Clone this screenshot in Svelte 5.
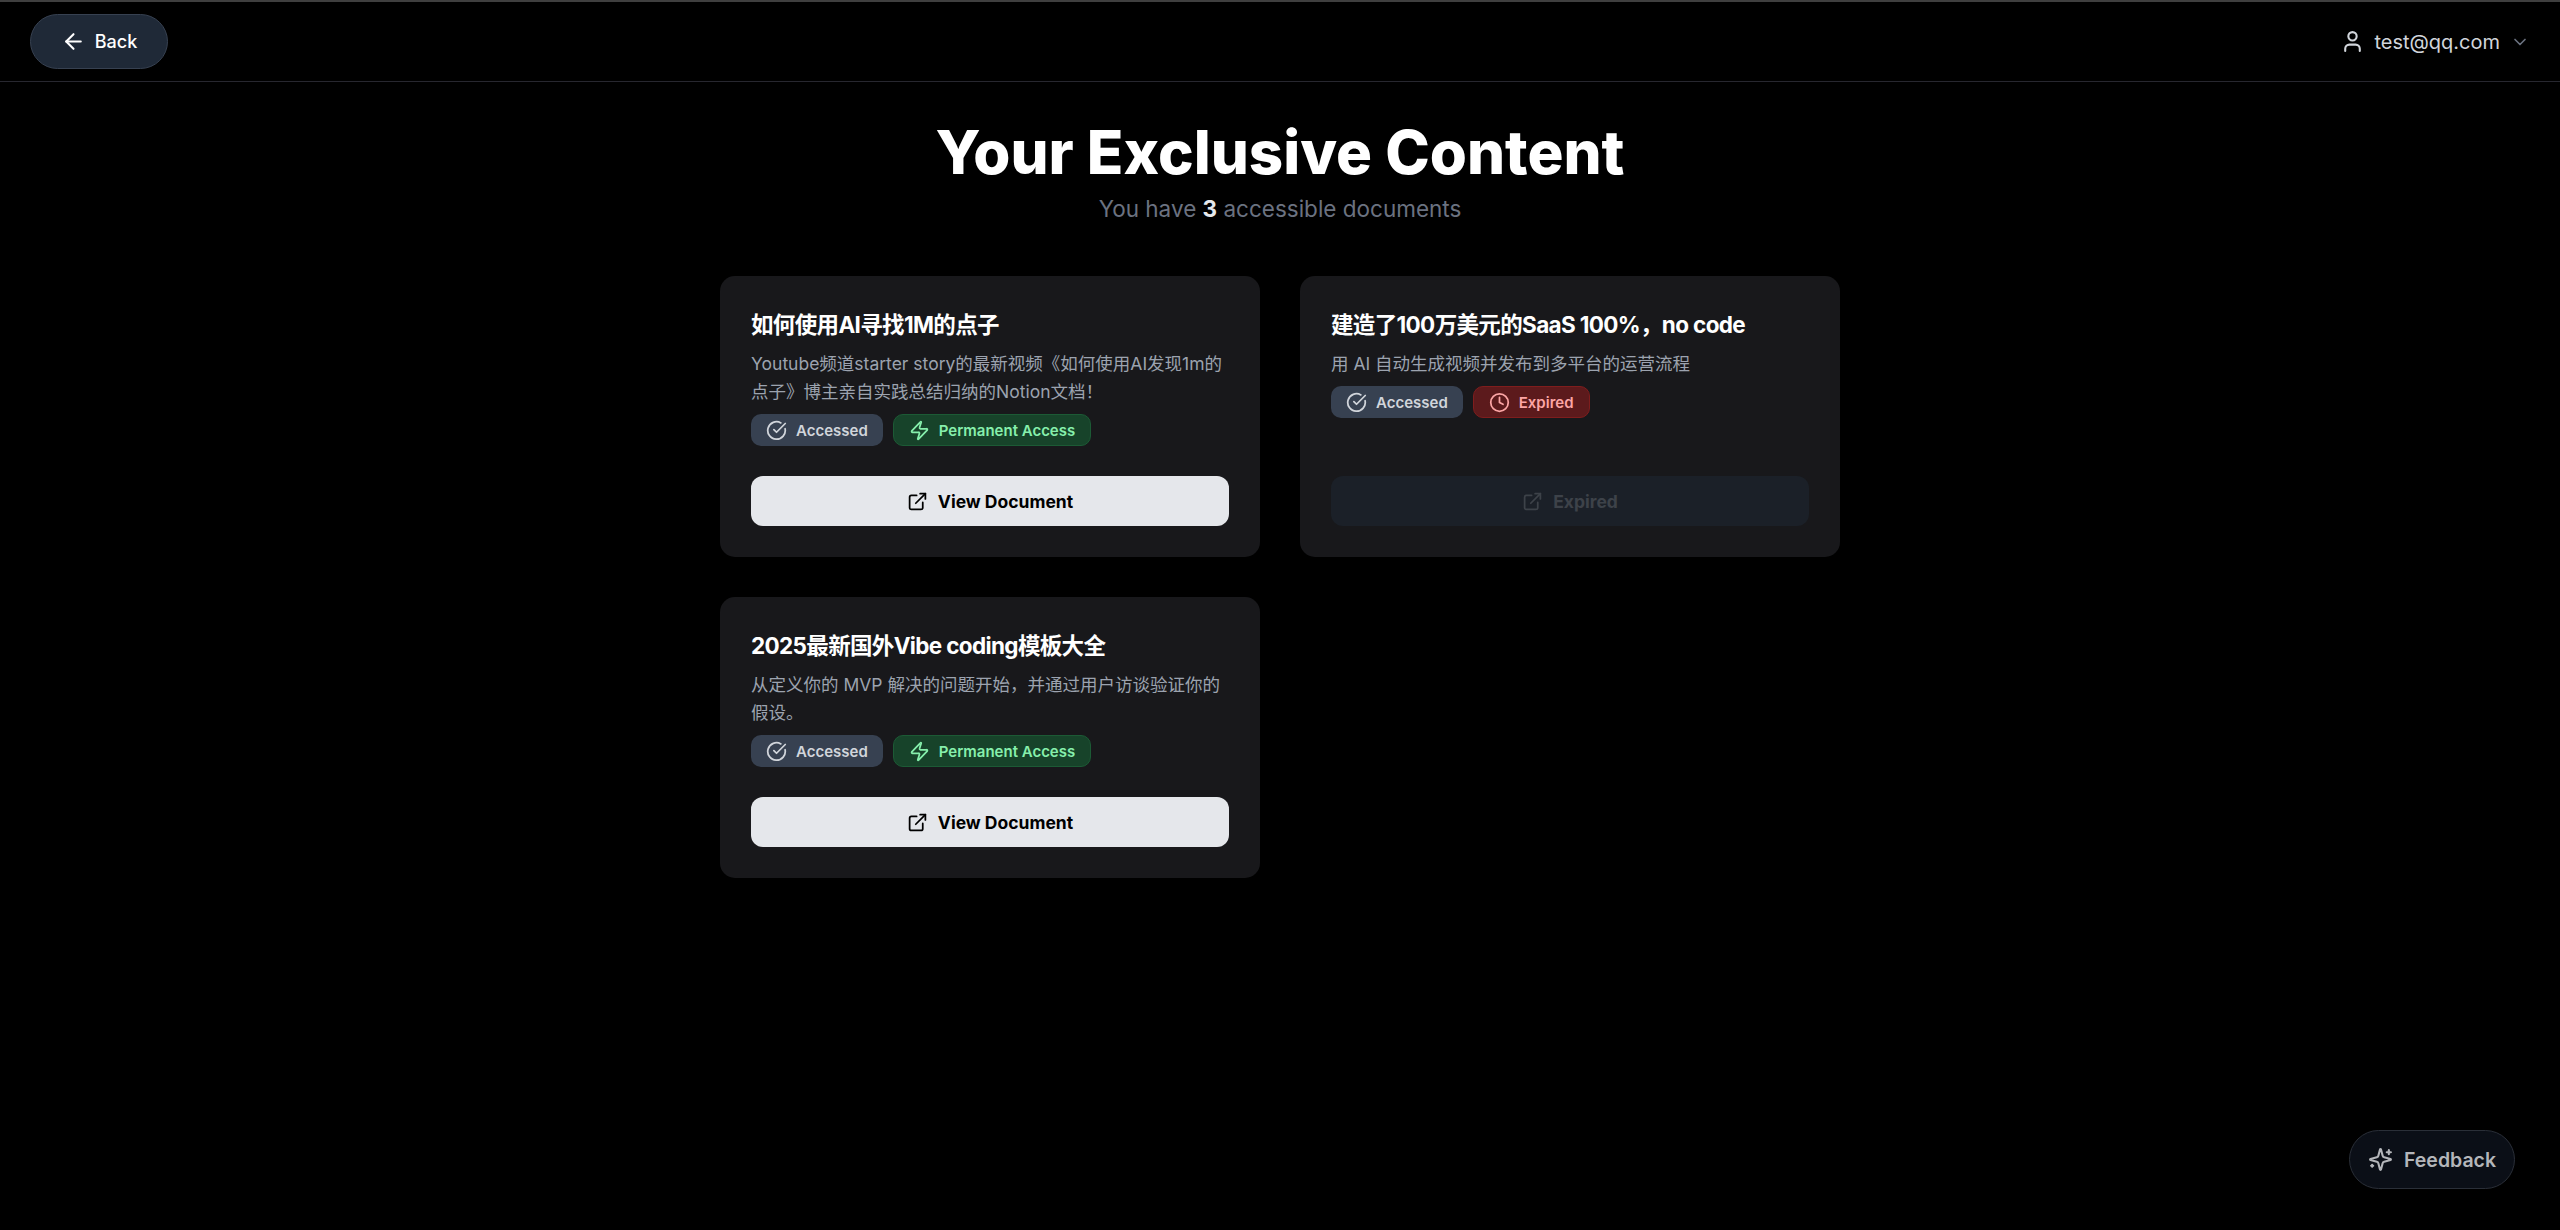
<script>
  const docs = [
    {
      title: "如何使用AI寻找1M的点子",
      desc: "Youtube频道starter story的最新视频《如何使用AI发现1m的点子》博主亲自实践总结归纳的Notion文档！",
      expired: false
    },
    {
      title: "建造了100万美元的SaaS 100%，no code",
      desc: "用 AI 自动生成视频并发布到多平台的运营流程",
      expired: true
    },
    {
      title: "2025最新国外Vibe coding模板大全",
      desc: "从定义你的 MVP 解决的问题开始，并通过用户访谈验证你的假设。",
      expired: false
    }
  ];
</script>

{#snippet linkIcon()}
  <svg class="icon" viewBox="0 0 24 24"><path d="M15 3h6v6" /><path d="M10 14 21 3" /><path d="M18 13v6a2 2 0 0 1-2 2H5a2 2 0 0 1-2-2V7a2 2 0 0 1 2-2h6" /></svg>
{/snippet}

<div class="page">
  <header class="topbar">
    <button class="back">
      <svg class="icon large" viewBox="0 0 24 24"><path d="m12 19-7-7 7-7" /><path d="M19 12H5" /></svg>
      Back
    </button>
    <button class="account">
      <svg class="icon large" viewBox="0 0 24 24"><path d="M19 21v-2a4 4 0 0 0-4-4H9a4 4 0 0 0-4 4v2" /><circle cx="12" cy="7" r="4" /></svg>
      <span>test@qq.com</span>
      <svg class="icon chevron" viewBox="0 0 24 24"><path d="m6 9 6 6 6-6" /></svg>
    </button>
  </header>

  <main class="content">
    <h1>Your Exclusive Content</h1>
    <p class="subtitle">You have <strong>3</strong> accessible documents</p>

    <div class="grid">
      {#each docs as doc}
        <article class="card">
          <h2>{doc.title}</h2>
          <p class="desc">{doc.desc}</p>
          <div class="badges">
            <span class="badge accessed">
              <svg class="icon" viewBox="0 0 24 24"><path d="M21.801 10A10 10 0 1 1 17 3.335" /><path d="m9 11 3 3L22 4" /></svg>
              Accessed
            </span>
            {#if doc.expired}
              <span class="badge expired">
                <svg class="icon" viewBox="0 0 24 24"><circle cx="12" cy="12" r="10" /><polyline points="12 6 12 12 16 14" /></svg>
                Expired
              </span>
            {:else}
              <span class="badge permanent">
                <svg class="icon" viewBox="0 0 24 24"><path d="M4 14a1 1 0 0 1-.78-1.63l9.9-10.2a.5.5 0 0 1 .86.46l-1.92 6.02A1 1 0 0 0 13 10h7a1 1 0 0 1 .78 1.63l-9.9 10.2a.5.5 0 0 1-.86-.46l1.92-6.02A1 1 0 0 0 11 14z" /></svg>
                Permanent Access
              </span>
            {/if}
          </div>
          {#if doc.expired}
            <button class="action disabled" disabled>{@render linkIcon()} Expired</button>
          {:else}
            <button class="action">{@render linkIcon()} View Document</button>
          {/if}
        </article>
      {/each}
    </div>
  </main>

  <button class="feedback">
    <svg class="icon large" viewBox="0 0 24 24"><path d="M9.937 15.5A2 2 0 0 0 8.5 14.063l-6.135-1.582a.5.5 0 0 1 0-.962L8.5 9.936A2 2 0 0 0 9.937 8.5l1.582-6.135a.5.5 0 0 1 .963 0L14.063 8.5A2 2 0 0 0 15.5 9.937l6.135 1.581a.5.5 0 0 1 0 .964L15.5 14.063a2 2 0 0 0-1.437 1.437l-1.582 6.135a.5.5 0 0 1-.963 0z" /><path d="M20 3v4" /><path d="M22 5h-4" /><path d="M4 17v2" /><path d="M5 18H3" /></svg>
    Feedback
  </button>
</div>

<style>
  :global(body) {
    margin: 0;
    background: #000;
  }

  .page {
    min-height: 1230px;
    background: #000;
    color: #fff;
    font-family: Inter, "Noto Sans CJK SC", sans-serif;
    border-top: 2px solid #3f3f3f;
    box-sizing: border-box;
  }

  button {
    font-family: inherit;
    cursor: pointer;
  }

  .icon {
    width: 21px;
    height: 21px;
    flex: none;
    fill: none;
    stroke: currentColor;
    stroke-width: 2;
    stroke-linecap: round;
    stroke-linejoin: round;
  }

  .icon.large {
    width: 25px;
    height: 25px;
  }

  .topbar {
    display: flex;
    align-items: center;
    justify-content: space-between;
    height: 79px;
    padding: 0 30px;
    border-bottom: 1px solid #27272f;
  }

  .back {
    display: flex;
    align-items: center;
    justify-content: center;
    gap: 9px;
    width: 138px;
    height: 55px;
    padding: 0;
    color: #fff;
    font-size: 18px;
    font-weight: 500;
    background: #1f2937;
    border: 1px solid #374151;
    border-radius: 28px;
  }

  .account {
    display: flex;
    align-items: center;
    gap: 9px;
    padding: 0;
    color: #d1d5db;
    font-size: 20px;
    background: none;
    border: none;
  }

  .chevron {
    width: 20px;
    height: 20px;
    margin-left: 1px;
    color: #6b7280;
  }

  .content {
    width: 1120px;
    margin: 0 auto;
    text-align: center;
  }

  h1 {
    margin: 33px 0 0;
    font-size: 60px;
    line-height: 75px;
    font-weight: 800;
  }

  .subtitle {
    margin: 0;
    padding-top: 1px;
    color: #6b7280;
    font-size: 22.5px;
    line-height: 35px;
  }

  .subtitle strong {
    color: #e5e7eb;
    font-weight: 700;
  }

  .grid {
    display: grid;
    grid-template-columns: 1fr 1fr;
    gap: 40px;
    margin-top: 50px;
    text-align: left;
  }

  .card {
    display: flex;
    flex-direction: column;
    padding: 31px;
    background: #18181b;
    border-radius: 15px;
  }

  h2 {
    margin: 0 0 8px;
    font-size: 22.5px;
    line-height: 35px;
    font-weight: 700;
    letter-spacing: -0.65px;
  }

  .desc {
    margin: 0 0 8px;
    color: #9ca3af;
    font-size: 17.5px;
    line-height: 28px;
  }

  .badges {
    display: flex;
    gap: 10px;
    margin-bottom: 30px;
  }

  .badge {
    display: flex;
    align-items: center;
    gap: 9px;
    box-sizing: border-box;
    height: 32px;
    padding: 0 15px;
    font-size: 15px;
    font-weight: 600;
    border-radius: 10px;
  }

  .accessed {
    color: #d1d5db;
    background: #374151;
  }

  .permanent {
    color: #86efac;
    background: #17432a;
    border: 1px solid #1c5a35;
  }

  .expired {
    color: #fca5a5;
    background: #5c1a1c;
    border: 1px solid #7f1d1d;
  }

  .action {
    display: flex;
    align-items: center;
    justify-content: center;
    gap: 10px;
    height: 50px;
    margin-top: auto;
    color: #000;
    font-size: 17.5px;
    font-weight: 700;
    background: #e5e7eb;
    border: none;
    border-radius: 12px;
  }

  .action.disabled {
    color: #3d4249;
    background: #1b2028;
    cursor: default;
  }

  .feedback {
    position: fixed;
    right: 45px;
    bottom: 41px;
    display: flex;
    align-items: center;
    gap: 11px;
    box-sizing: border-box;
    width: 166px;
    height: 59px;
    padding: 0 0 0 18px;
    color: #b4b6ba;
    font-size: 19.5px;
    font-weight: 600;
    background: #0b0f17;
    border: 1px solid #2a2f38;
    border-radius: 30px;
  }
</style>
